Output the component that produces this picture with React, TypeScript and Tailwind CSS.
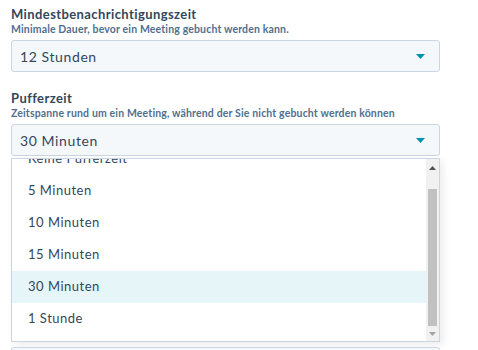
import React from "react";

const Caret = () => (
  <svg width="9" height="5" viewBox="0 0 9 5" className="shrink-0">
    <path d="M0 0 L9 0 L4.5 5 Z" fill="#0091ae" />
  </svg>
);

function Select({ value }: { value: string }) {
  return (
    <div className="flex h-[32px] items-center justify-between rounded-[3px] border border-[#cbd6e2] bg-[#f5f8fa] pl-[8px] pr-[14px]">
      <span className="text-[14px] tracking-[0.6px] text-[#33475b]">{value}</span>
      <Caret />
    </div>
  );
}

const items = ["Keine Pufferzeit", "5 Minuten", "10 Minuten", "15 Minuten", "30 Minuten", "1 Stunde"];

export default function App() {
  return (
    <div
      className="h-[350px] w-[478px] overflow-hidden bg-white pl-[11px] pt-[6px]"
      style={{ fontFamily: "Lato, 'Noto Sans', sans-serif" }}
    >
      <div className="w-[429px]">
        <div className="text-[13px] font-bold leading-[16px] tracking-[0.4px] text-[#33475b]">
          Mindestbenachrichtigungszeit
        </div>
        <div className="text-[10.5px] font-bold leading-[14px] tracking-[0.15px] text-[#516f90]">
          Minimale Dauer, bevor ein Meeting gebucht werden kann.
        </div>
        <div className="mt-[4px]">
          <Select value="12 Stunden" />
        </div>
        <div className="mt-[18px] text-[13px] font-bold leading-[16px] tracking-[0.4px] text-[#33475b]">
          Pufferzeit
        </div>
        <div className="text-[10.5px] font-bold leading-[14px] tracking-[0.15px] text-[#516f90]">
          Zeitspanne rund um ein Meeting, während der Sie nicht gebucht werden können
        </div>
        <div className="mt-[4px]">
          <Select value="30 Minuten" />
        </div>
        <div className="mt-[2px] flex h-[184px] border border-[#cbd6e2] bg-white shadow-[3px_3px_8px_rgba(0,0,0,0.08)]">
          <div className="flex-1 overflow-hidden">
            <div className="-mt-[16px]">
              {items.map((it) => (
                <div
                  key={it}
                  className={`flex h-[32px] items-center pl-[16px] text-[13px] tracking-[0.5px] text-[#33475b] ${
                    it === "30 Minuten" ? "bg-[#e5f5f8]" : ""
                  }`}
                >
                  {it}
                </div>
              ))}
            </div>
          </div>
          <div className="flex w-[13px] flex-col bg-[#f1f1f1]">
            <div className="flex h-[17px] items-center justify-center">
              <svg width="7" height="4" viewBox="0 0 7 4">
                <path d="M0 4 L7 4 L3.5 0 Z" fill="#505050" />
              </svg>
            </div>
            <div className="mx-[2px] mt-[13px] flex-1 bg-[#c1c1c1]" />
            <div className="flex h-[15px] items-center justify-center">
              <svg width="7" height="4" viewBox="0 0 7 4">
                <path d="M0 0 L7 0 L3.5 4 Z" fill="#a3a3a3" />
              </svg>
            </div>
          </div>
        </div>
        <div className="mt-[5px] h-[30px] rounded-[3px] border border-[#cbd6e2] bg-[#f5f8fa]" />
      </div>
    </div>
  );
}
